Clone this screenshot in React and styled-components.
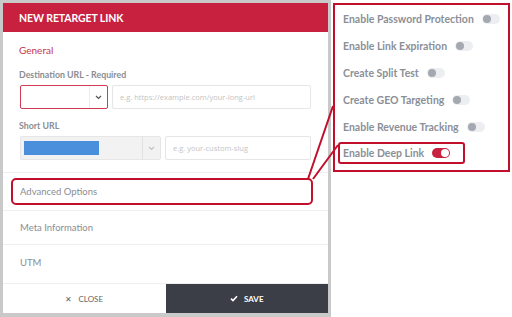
import React from "react";
import styled, { createGlobalStyle } from "styled-components";

const GlobalStyle = createGlobalStyle`
  html, body {
    margin: 0;
    padding: 0;
    background: #ffffff;
    font-family: Lato, "Open Sans", sans-serif;
  }
`;

const red = "#c8203f";
const mark = "#c0102c";

const Page = styled.div`
  position: relative;
  width: 512px;
  height: 317px;
  display: flex;
  overflow: hidden;
`;

const Backdrop = styled.div`
  width: 325px;
  height: 310px;
  padding: 3px 3px 4px 3px;
  background: #c9c9c9;
  flex-shrink: 0;
`;

const Modal = styled.div`
  height: 100%;
  background: #fff;
  display: flex;
  flex-direction: column;
`;

const Header = styled.div`
  height: 30px;
  background: ${red};
  color: #fff;
  font-weight: 700;
  font-size: 10.5px;
  display: flex;
  align-items: center;
  padding-left: 16px;
  letter-spacing: -0.1px;
`;

const Body = styled.div`
  padding: 12px 17px 0 17px;
`;

const SectionTitle = styled.div`
  color: #c3354f;
  font-size: 10px;
  margin-bottom: 13px;
  margin-left: -1px;
`;

const Label = styled.div`
  color: #8b8d91;
  font-size: 8.8px;
  font-weight: 700;
  margin-bottom: 5px;
  margin-left: -1px;
`;

const FieldRow = styled.div`
  display: flex;
  gap: 4px;
  height: 24px;
  margin-bottom: 11px;
`;

const Select = styled.div`
  box-sizing: border-box;
  width: ${(p) => p.$w}px;
  height: 100%;
  display: flex;
  align-items: center;
  border: 1px solid ${(p) => (p.$invalid ? "#d23a55" : "#e6e6e6")};
  background: ${(p) => (p.$invalid ? "#fff" : "#f2f2f2")};
  border-radius: 2px;
  padding-left: 3px;
`;

const SelectSpace = styled.div`
  flex: 1;
  height: 14px;
`;

const SelectValue = styled.div`
  width: 75px;
  height: 14px;
  background: #4a8fdb;
`;

const Chevron = styled.div`
  width: 17px;
  height: 100%;
  border-left: 1px solid ${(p) => (p.$muted ? "#e2e2e2" : "#ececec")};
  display: flex;
  align-items: center;
  justify-content: center;
  color: ${(p) => (p.$muted ? "#c2c2c2" : "#555")};
`;

const Input = styled.div`
  box-sizing: border-box;
  flex: 1;
  height: 100%;
  border: 1px solid #e6e6e6;
  border-radius: 2px;
  display: flex;
  align-items: center;
  padding-left: 7px;
  color: #c4c4c4;
  font-family: "Open Sans", Lato, sans-serif;
  font-size: 7.5px;
`;

const Rows = styled.div`
  margin-top: 1px;
  flex: 1;
  display: flex;
  flex-direction: column;
`;

const Row = styled.div`
  box-sizing: border-box;
  border-top: 1px solid #efefef;
  height: ${(p) => p.$h}px;
  display: flex;
  align-items: center;
  padding: 0 ${(p) => (p.$boxed ? "14px 0 8px" : "0 0 17px")};
  padding-bottom: ${(p) => p.$pb || 0}px;
  color: #8a8d94;
  font-size: 9.5px;
`;

const RowBox = styled.div`
  box-sizing: border-box;
  width: 302px;
  height: 27px;
  border: 2px solid ${mark};
  border-radius: 5px;
  display: flex;
  align-items: center;
  padding-left: 7px;
`;

const Footer = styled.div`
  display: flex;
  height: 29px;
  border-top: 1px solid #efefef;
`;

const FooterButton = styled.div`
  flex: 1;
  display: flex;
  align-items: center;
  justify-content: center;
  gap: 6px;
  font-size: 8px;
  font-weight: ${(p) => (p.$primary ? 700 : 400)};
  background: ${(p) => (p.$primary ? "#3b3e46" : "#fff")};
  color: ${(p) => (p.$primary ? "#fff" : "#666")};
  text-transform: uppercase;
`;

const Options = styled.div`
  box-sizing: border-box;
  margin: 3px 0 0 2px;
  width: 177px;
  height: 169px;
  border: 2px solid ${mark};
  padding: 0 0 0 2px;
  display: flex;
  flex-direction: column;
`;

const Option = styled.div`
  box-sizing: border-box;
  height: 27px;
  display: flex;
  align-items: center;
  gap: 8px;
  padding-left: ${(p) => (p.$marked ? 3 : 6)}px;
  width: ${(p) => (p.$marked ? "127px" : "auto")};
  color: #8b8f97;
  font-size: 10.5px;
  font-weight: 700;
  ${(p) =>
    p.$marked &&
    `
    height: 22px;
    margin-top: 2px;
    margin-left: 1px;
    border: 2px solid ${mark};
    border-radius: 3px;
  `}
`;

const Track = styled.div`
  position: relative;
  width: 18px;
  height: 10px;
  border-radius: 5px;
  background: ${(p) => (p.$on ? red : "#eceef1")};
`;

const Knob = styled.div`
  position: absolute;
  top: 1px;
  left: ${(p) => (p.$on ? "9px" : "1px")};
  width: 8px;
  height: 8px;
  border-radius: 50%;
  background: ${(p) => (p.$on ? "#fff" : "#a4a8b0")};
`;

const Callout = styled.svg`
  position: absolute;
  left: 0;
  top: 0;
  pointer-events: none;
`;

const Toggle = ({ on }) => (
  <Track $on={on}>
    <Knob $on={on} />
  </Track>
);

const ChevronIcon = () => (
  <svg width="7" height="5" viewBox="0 0 7 5">
    <path d="M1 1l2.5 2.5L6 1" fill="none" stroke="currentColor" strokeWidth="1.2" />
  </svg>
);

const options = [
  "Enable Password Protection",
  "Enable Link Expiration",
  "Create Split Test",
  "Create GEO Targeting",
  "Enable Revenue Tracking",
];

export default function App() {
  return (
    <Page>
      <GlobalStyle />
      <Backdrop>
        <Modal>
          <Header>NEW RETARGET LINK</Header>
          <Body>
            <SectionTitle>General</SectionTitle>
            <Label>Destination URL - Required</Label>
            <FieldRow>
              <Select $w={88} $invalid>
                <SelectSpace />
                <Chevron>
                  <ChevronIcon />
                </Chevron>
              </Select>
              <Input>e.g. https://example.com/your-long-url</Input>
            </FieldRow>
            <Label>Short URL</Label>
            <FieldRow>
              <Select $w={141}>
                <SelectValue />
                <SelectSpace />
                <Chevron $muted>
                  <ChevronIcon />
                </Chevron>
              </Select>
              <Input>e.g. your-custom-slug</Input>
            </FieldRow>
          </Body>
          <Rows>
            <Row $h={38} $boxed>
              <RowBox>Advanced Options</RowBox>
            </Row>
            <Row $h={34}>Meta Information</Row>
            <Row $h={39} $pb={4}>UTM</Row>
          </Rows>
          <Footer>
            <FooterButton>
              <span>✕</span>
              Close
            </FooterButton>
            <FooterButton $primary>
              <svg width="8" height="7" viewBox="0 0 8 7">
                <path d="M1 3.6l2 2L7 1.2" fill="none" stroke="#fff" strokeWidth="1.6" />
              </svg>
              Save
            </FooterButton>
          </Footer>
        </Modal>
      </Backdrop>
      <Options>
        {options.map((o) => (
          <Option key={o}>
            {o}
            <Toggle />
          </Option>
        ))}
        <Option $marked>
          Enable Deep Link
          <Toggle on />
        </Option>
      </Options>
      <Callout width="512" height="317">
        <path d="M308 179L333 106M313 179L338 145" stroke={mark} strokeWidth="2" fill="none" />
      </Callout>
    </Page>
  );
}
